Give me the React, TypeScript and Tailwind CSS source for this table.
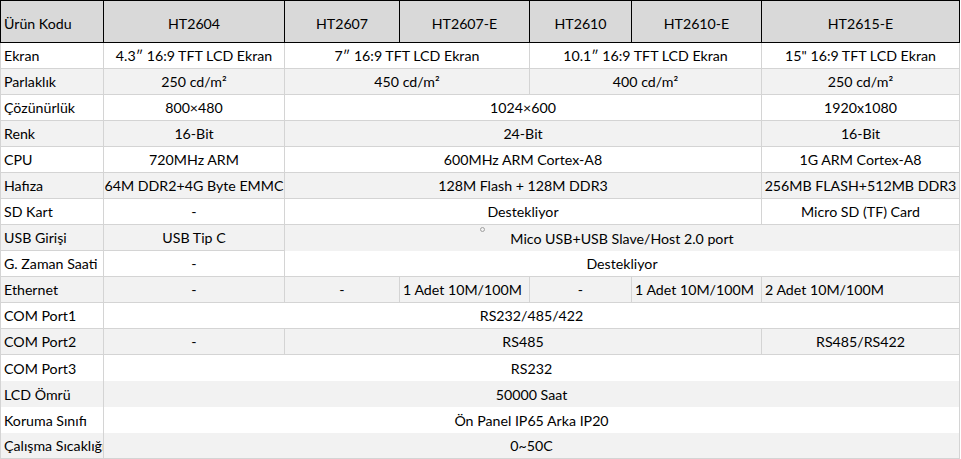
import React from "react";

type Cell = { t: string; s: number; left?: boolean; nb?: boolean };
type Row = { label: string; cells: Cell[]; gray: boolean; nb?: boolean };

const spanCls: Record<number, string> = {
  1: "col-span-1",
  2: "col-span-2",
  4: "col-span-4",
  5: "col-span-5",
  6: "col-span-6",
};

const rows: Row[] = [
  {
    label: "Ekran",
    gray: false,
    cells: [
      { t: "4.3″ 16:9 TFT LCD Ekran", s: 1 },
      { t: "7″ 16:9 TFT LCD Ekran", s: 2 },
      { t: "10.1″ 16:9 TFT LCD Ekran", s: 2 },
      { t: '15" 16:9 TFT LCD Ekran', s: 1 },
    ],
  },
  {
    label: "Parlaklık",
    gray: true,
    cells: [
      { t: "250 cd/m²", s: 1 },
      { t: "450 cd/m²", s: 2 },
      { t: "400 cd/m²", s: 2 },
      { t: "250 cd/m²", s: 1 },
    ],
  },
  {
    label: "Çözünürlük",
    gray: false,
    cells: [
      { t: "800×480", s: 1 },
      { t: "1024×600", s: 4 },
      { t: "1920x1080", s: 1 },
    ],
  },
  {
    label: "Renk",
    gray: true,
    cells: [
      { t: "16-Bit", s: 1 },
      { t: "24-Bit", s: 4 },
      { t: "16-Bit", s: 1 },
    ],
  },
  {
    label: "CPU",
    gray: false,
    cells: [
      { t: "720MHz ARM", s: 1 },
      { t: "600MHz ARM Cortex-A8", s: 4 },
      { t: "1G ARM Cortex-A8", s: 1 },
    ],
  },
  {
    label: "Hafıza",
    gray: true,
    cells: [
      { t: "64M DDR2+4G Byte EMMC", s: 1 },
      { t: "128M Flash + 128M DDR3", s: 4 },
      { t: "256MB FLASH+512MB DDR3", s: 1 },
    ],
  },
  {
    label: "SD Kart",
    gray: false,
    cells: [
      { t: "-", s: 1 },
      { t: "Destekliyor", s: 4 },
      { t: "Micro SD (TF) Card", s: 1 },
    ],
  },
  {
    label: "USB Girişi",
    gray: true,
    cells: [
      { t: "USB Tip C", s: 1 },
      { t: "Mico USB+USB Slave/Host 2.0 port", s: 5, nb: true },
    ],
  },
  {
    label: "G. Zaman Saati",
    gray: false,
    cells: [
      { t: "-", s: 1 },
      { t: "Destekliyor", s: 5 },
    ],
  },
  {
    label: "Ethernet",
    gray: true,
    cells: [
      { t: "-", s: 1 },
      { t: "-", s: 1 },
      { t: "1 Adet 10M/100M", s: 1, left: true },
      { t: "-", s: 1 },
      { t: "1 Adet 10M/100M", s: 1, left: true },
      { t: "2 Adet 10M/100M", s: 1, left: true },
    ],
  },
  {
    label: "COM Port1",
    gray: false,
    cells: [{ t: "RS232/485/422", s: 6 }],
  },
  {
    label: "COM Port2",
    gray: true,
    cells: [
      { t: "-", s: 1 },
      { t: "RS485", s: 4 },
      { t: "RS485/RS422", s: 1 },
    ],
  },
  {
    label: "COM Port3",
    gray: false,
    nb: true,
    cells: [{ t: "RS232", s: 6 }],
  },
  {
    label: "LCD Ömrü",
    gray: true,
    nb: true,
    cells: [{ t: "50000 Saat", s: 6 }],
  },
  {
    label: "Koruma Sınıfı",
    gray: false,
    nb: true,
    cells: [{ t: "Ön Panel IP65 Arka IP20", s: 6 }],
  },
  {
    label: "Çalışma Sıcaklığı",
    gray: true,
    cells: [{ t: "0~50C", s: 6 }],
  },
];

const headers = ["HT2604", "HT2607", "HT2607-E", "HT2610", "HT2610-E", "HT2615-E"];

export default function App() {
  return (
    <div
      className="relative w-[961px] h-[459px] overflow-hidden bg-white text-black text-[14.2px]"
      style={{ fontFamily: "Lato, 'Noto Sans', sans-serif" }}
    >
      <div className="grid grid-cols-[104px_181px_115px_130px_102px_130px_198px] grid-rows-[43px_repeat(16,26px)]">
        <div className="flex items-center pt-[4px] pl-[3px] bg-[#d9d9d9] border-t border-l border-r border-b border-black">
          Ürün Kodu
        </div>
        {headers.map((h) => (
          <div
            key={h}
            className="flex items-center justify-center pt-[4px] bg-[#d9d9d9] border-t border-r border-b border-black"
          >
            {h}
          </div>
        ))}
        {rows.map((r) => {
          const bg = r.gray ? "bg-[#f2f2f2]" : "bg-white";
          return (
            <React.Fragment key={r.label}>
              <div
                className={`flex items-end pb-[2px] pl-[3px] whitespace-nowrap overflow-hidden border-l border-r border-[#d4d4d4] ${bg} ${
                  r.nb ? "" : "border-b"
                }`}
              >
                {r.label}
              </div>
              {r.cells.map((c, i) => (
                <div
                  key={i}
                  className={`flex items-end pb-[2px] whitespace-nowrap border-r border-[#d4d4d4] ${spanCls[c.s]} ${bg} ${
                    c.left ? "justify-start pl-[3px]" : "justify-center"
                  } ${r.nb || c.nb ? "" : "border-b"}`}
                >
                  {c.t}
                </div>
              ))}
            </React.Fragment>
          );
        })}
      </div>
      <div className="absolute left-[480px] top-[227px] w-[5px] h-[5px] rounded-full border border-[#a0a0a0]" />
    </div>
  );
}
